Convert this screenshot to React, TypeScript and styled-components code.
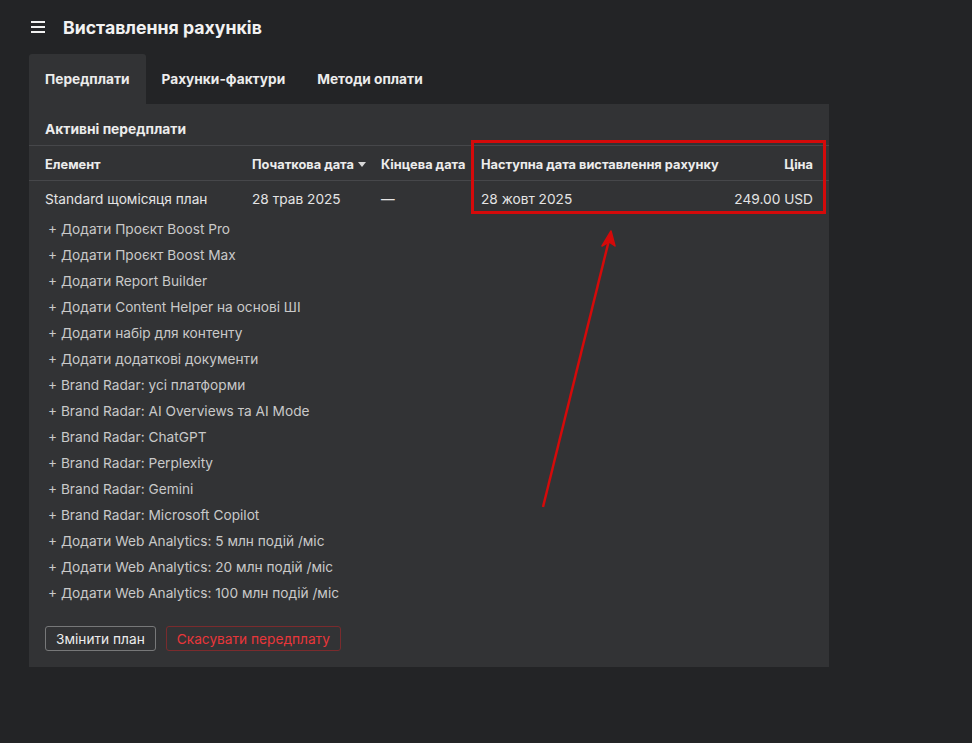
import styled, { createGlobalStyle } from "styled-components";

const addons = [
  "Додати Проєкт Boost Pro",
  "Додати Проєкт Boost Max",
  "Додати Report Builder",
  "Додати Content Helper на основі ШІ",
  "Додати набір для контенту",
  "Додати додаткові документи",
  "Brand Radar: усі платформи",
  "Brand Radar: AI Overviews та AI Mode",
  "Brand Radar: ChatGPT",
  "Brand Radar: Perplexity",
  "Brand Radar: Gemini",
  "Brand Radar: Microsoft Copilot",
  "Додати Web Analytics: 5 млн подій /міс",
  "Додати Web Analytics: 20 млн подій /міс",
  "Додати Web Analytics: 100 млн подій /міс",
];

const tabs = ["Передплати", "Рахунки-фактури", "Методи оплати"];

const GlobalStyle = createGlobalStyle`
  html, body {
    margin: 0;
    background: #232426;
    font-family: Inter, "Noto Sans", sans-serif;
    color: #e6e6e6;
  }
  * { box-sizing: border-box; }
`;

const Page = styled.div`
  position: relative;
  width: 972px;
  height: 743px;
  padding: 0 143px 0 29px;
`;

const Header = styled.div`
  display: flex;
  align-items: center;
  gap: 18px;
  height: 54px;
  padding-left: 2px;
`;

const Title = styled.h1`
  margin: 0;
  font-size: 17.7px;
  font-weight: 700;
  color: #f2f2f2;
`;

const Tabs = styled.div`
  display: flex;
`;

const Tab = styled.div<{ $active?: boolean }>`
  height: 50px;
  padding: 0 16px;
  display: flex;
  align-items: center;
  font-size: 13.7px;
  font-weight: 700;
  color: #ececec;
  border-radius: 3px 3px 0 0;
  background: ${(p) => (p.$active ? "#323335" : "transparent")};
`;

const Panel = styled.div`
  background: #323335;
  padding-bottom: 16px;
`;

const PanelTitle = styled.div`
  height: 42px;
  padding: 8px 16px 0;
  display: flex;
  align-items: center;
  font-size: 13.8px;
  font-weight: 700;
  color: #ececec;
  border-bottom: 1px solid #46474a;
`;

const Row = styled.div<{ $head?: boolean }>`
  display: grid;
  grid-template-columns: 207px 129px 100px 1fr auto;
  align-items: center;
  height: 35px;
  padding: ${(p) => (p.$head ? "3px 16px 0" : "0 16px")};
  font-size: ${(p) => (p.$head ? "12.8px" : "13.7px")};
  font-weight: ${(p) => (p.$head ? 700 : 400)};
  color: ${(p) => (p.$head ? "#ececec" : "#e4e4e4")};
  border-bottom: ${(p) => (p.$head ? "1px solid #46474a" : "none")};
`;

const SortCell = styled.span`
  display: inline-flex;
  align-items: center;
  gap: 4px;
`;

const Caret = styled.span`
  width: 0;
  height: 0;
  border-left: 4px solid transparent;
  border-right: 4px solid transparent;
  border-top: 5px solid #d8d8d8;
`;

const Right = styled.span`
  text-align: right;
`;

const AddList = styled.div`
  display: flex;
  flex-direction: column;
  padding: 0 19px;
`;

const AddItem = styled.div`
  height: 26px;
  display: flex;
  align-items: center;
  font-size: 13.7px;
  color: #c9c9c9;
`;

const Actions = styled.div`
  display: flex;
  gap: 10px;
  padding: 20px 16px 0;
`;

const Button = styled.button<{ $danger?: boolean }>`
  height: 25px;
  padding: 0 10px;
  font-family: inherit;
  font-size: 13.7px;
  background: transparent;
  border-radius: 3px;
  color: ${(p) => (p.$danger ? "#e8363a" : "#ececec")};
  border: 1px solid ${(p) => (p.$danger ? "#7a2b2d" : "#777879")};
`;

const Highlight = styled.div`
  position: absolute;
  left: 471px;
  top: 140px;
  width: 355px;
  height: 74px;
  border: 3px solid #d40a0a;
  pointer-events: none;
`;

const Arrow = styled.svg`
  position: absolute;
  left: 0;
  top: 0;
  pointer-events: none;
`;

const Hamburger = () => (
  <svg width="14" height="12" viewBox="0 0 14 12">
    <rect x="0" y="0" width="14" height="2" fill="#f0f0f0" />
    <rect x="0" y="5" width="14" height="2" fill="#f0f0f0" />
    <rect x="0" y="10" width="14" height="2" fill="#f0f0f0" />
  </svg>
);

export default function App() {
  return (
    <Page>
      <GlobalStyle />
      <Header>
        <Hamburger />
        <Title>Виставлення рахунків</Title>
      </Header>
      <Tabs>
        {tabs.map((t, i) => (
          <Tab key={t} $active={i === 0}>{t}</Tab>
        ))}
      </Tabs>
      <Panel>
        <PanelTitle>Активні передплати</PanelTitle>
        <Row $head>
          <span>Елемент</span>
          <SortCell>Початкова дата <Caret /></SortCell>
          <span>Кінцева дата</span>
          <span>Наступна дата виставлення рахунку</span>
          <Right>Ціна</Right>
        </Row>
        <Row>
          <span>Standard щомісяця план</span>
          <span>28 трав 2025</span>
          <span>—</span>
          <span>28 жовт 2025</span>
          <Right>249.00 USD</Right>
        </Row>
        <AddList>
          {addons.map((a) => (
            <AddItem key={a}>+ {a}</AddItem>
          ))}
        </AddList>
        <Actions>
          <Button>Змінити план</Button>
          <Button $danger>Скасувати передплату</Button>
        </Actions>
      </Panel>
      <Highlight />
      <Arrow width="972" height="743" viewBox="0 0 972 743">
        <line x1="543" y1="507" x2="609" y2="240" stroke="#d40a0a" strokeWidth="2.5" />
        <path d="M611 231 L602 246 L609 242 L615 246 Z" fill="#d40a0a" stroke="#d40a0a" strokeWidth="1.5" strokeLinejoin="round" />
      </Arrow>
    </Page>
  );
}
